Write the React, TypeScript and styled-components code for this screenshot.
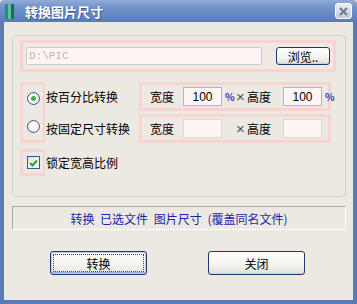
import styled, { createGlobalStyle } from "styled-components";

const GlobalStyle = createGlobalStyle`
  html, body {
    margin: 0;
    padding: 0;
    background: #ece9e3;
  }
  * {
    box-sizing: border-box;
  }
`;

const font = `"Noto Sans CJK SC", "Liberation Sans", sans-serif`;

export default function App() {
  return (
    <>
      <GlobalStyle />
      <Window>
        <TitleBar>
          <AppIcon>
            <svg width="9" height="15" viewBox="0 0 9 15">
              <rect x="0" y="0" width="3" height="15" fill="#2f8a78" />
              <rect x="3" y="0" width="3" height="15" fill="#5bc0a8" />
              <rect x="6" y="0" width="3" height="15" fill="#1f6a5c" />
            </svg>
          </AppIcon>
          <Title>转换图片尺寸</Title>
          <CloseButton>
            <svg width="9" height="9" viewBox="0 0 9 9">
              <path d="M1 1 L8 8 M8 1 L1 8" stroke="#6b7a90" strokeWidth="2" />
            </svg>
          </CloseButton>
        </TitleBar>

        <Body>
          <GroupBox>
            <Highlight>
              <PathRow>
                <TextBox $muted $mono>D:\PIC</TextBox>
                <Button $small>浏览..</Button>
              </PathRow>
            </Highlight>

            <OptionsGrid>
              <RadioColumn>
                <Radio $checked />
                <Radio />
              </RadioColumn>
              <OptionLabel $row={1}>按百分比转换</OptionLabel>
              <OptionLabel $row={2}>按固定尺寸转换</OptionLabel>
              <SizeRow $row={1}>
                <Label $w={33}>宽度</Label>
                <Input>100</Input>
                <Unit>%</Unit>
                <Times>×</Times>
                <Label $w={36}>高度</Label>
                <Input>100</Input>
                <Unit>%</Unit>
              </SizeRow>
              <SizeRow $row={2}>
                <Label $w={33}>宽度</Label>
                <Input $empty />
                <Unit />
                <Times>×</Times>
                <Label $w={36}>高度</Label>
                <Input $empty />
                <Unit />
              </SizeRow>
            </OptionsGrid>

            <CheckRow>
              <CheckHighlight>
                <CheckBox>
                  <svg width="9" height="8" viewBox="0 0 9 8">
                    <path d="M1 4 L3.5 6.5 L8 1.5" fill="none" stroke="#2fa02f" strokeWidth="2" />
                  </svg>
                </CheckBox>
              </CheckHighlight>
              <OptionLabel>锁定宽高比例</OptionLabel>
            </CheckRow>
          </GroupBox>

          <StatusPanel>转换 已选文件 图片尺寸 (覆盖同名文件)</StatusPanel>

          <ButtonRow>
            <Button $default>转换</Button>
            <Button>关闭</Button>
          </ButtonRow>
        </Body>
      </Window>
    </>
  );
}

const Window = styled.div`
  width: 357px;
  height: 304px;
  display: flex;
  flex-direction: column;
  font-family: ${font};
  font-size: 12px;
  color: #000;
`;

const TitleBar = styled.div`
  height: 22px;
  display: flex;
  align-items: center;
  padding: 0 5px 0 5px;
  background: linear-gradient(#93acd9 0%, #7191cb 35%, #6586c2 70%, #5a7bb8 100%);
  border-radius: 4px 4px 0 0;
`;

const AppIcon = styled.div`
  width: 12px;
  display: flex;
  align-items: center;
`;

const Title = styled.div`
  flex: 1;
  margin-left: 8px;
  color: #fff;
  font-weight: bold;
  font-size: 13px;
  text-shadow: 1px 1px 0 #3a5a90;
`;

const CloseButton = styled.div`
  width: 17px;
  height: 16px;
  display: flex;
  align-items: center;
  justify-content: center;
  border: 1px solid #ffffff;
  border-radius: 3px;
  background: linear-gradient(#e8ecf3, #c3cbd8);
`;

const Body = styled.div`
  flex: 1;
  display: flex;
  flex-direction: column;
  background: #ece9e3;
  border: 4px solid #5b7bb4;
  border-top: none;
  padding: 13px 7px 0 8px;
`;

const GroupBox = styled.div`
  height: 162px;
  border: 1px solid #d2d0c6;
  border-radius: 4px;
  padding: 4px 9px 0 7px;
  display: flex;
  flex-direction: column;
`;

const Highlight = styled.div`
  border: 3px solid #f8d3cf;
  background: #efe8e3;
`;

const PathRow = styled.div`
  height: 26px;
  display: flex;
  align-items: center;
  justify-content: space-between;
  padding: 0 3px 0 3px;
`;

const TextBox = styled.div<{ $muted?: boolean; $mono?: boolean }>`
  width: 236px;
  height: 18px;
  display: flex;
  align-items: center;
  padding-left: 2px;
  border: 1px solid #c9ccd4;
  background: #fef4f3;
  color: ${(p) => (p.$muted ? "#b8b8b8" : "#000")};
  font-family: ${(p) => (p.$mono ? `"Liberation Mono", monospace` : font)};
  font-size: 11px;
`;

const Button = styled.div<{ $small?: boolean; $default?: boolean }>`
  width: ${(p) => (p.$small ? "54px" : "97px")};
  height: ${(p) => (p.$small ? "18px" : "24px")};
  display: flex;
  align-items: center;
  justify-content: center;
  border: 1px solid #1c3a6e;
  border-radius: 3px;
  background: linear-gradient(#ffffff 0%, #f4f3ee 60%, #e2e0d8 100%);
  font-size: 12px;
  box-shadow: ${(p) =>
    p.$default
      ? "inset 0 0 0 1px #b8cff0, inset 0 -2px 0 #8fb0e0"
      : "inset 0 -1px 0 #d6d0c5"};
  outline: ${(p) => (p.$default ? "1px dotted #444" : "none")};
  outline-offset: -4px;
`;

const OptionsGrid = styled.div`
  display: grid;
  grid-template-columns: 25px 94px 192px;
  grid-template-rows: 29px 29px;
  row-gap: 3px;
  margin-top: 10px;
`;

const RadioColumn = styled.div`
  grid-column: 1;
  grid-row: 1 / 3;
  display: flex;
  flex-direction: column;
  justify-content: space-around;
  align-items: center;
  border: 3px solid #f8d3cf;
  border-right-width: 2px;
`;

const Radio = styled.div<{ $checked?: boolean }>`
  width: 13px;
  height: 13px;
  border-radius: 50%;
  border: 1px solid #3c5a8c;
  background: radial-gradient(circle at 50% 50%, #ffffff 30%, #dcdad2 100%);
  display: flex;
  align-items: center;
  justify-content: center;
  &::after {
    content: "";
    width: 5px;
    height: 5px;
    border-radius: 50%;
    background: ${(p) => (p.$checked ? "#3fb33f" : "transparent")};
  }
`;

const OptionLabel = styled.div<{ $row?: number }>`
  grid-column: 2;
  grid-row: ${(p) => p.$row ?? "auto"};
  display: flex;
  align-items: center;
  padding-left: 1px;
  font-size: 12px;
  white-space: nowrap;
`;

const SizeRow = styled.div<{ $row: number }>`
  grid-column: 3;
  grid-row: ${(p) => p.$row};
  display: flex;
  align-items: center;
  border: 3px solid #f8d3cf;
  padding-left: 8px;
`;

const Label = styled.span<{ $w: number }>`
  flex-shrink: 0;
  font-size: 12px;
  width: ${(p) => p.$w}px;
`;

const Input = styled.div<{ $empty?: boolean }>`
  flex-shrink: 0;
  width: 39px;
  height: 19px;
  display: flex;
  align-items: center;
  justify-content: center;
  border: 1px solid ${(p) => (p.$empty ? "#e0d6d3" : "#a9b6cc")};
  background: #fef5f4;
  font-family: "Liberation Sans", sans-serif;
  font-size: 12px;
`;

const Unit = styled.span`
  flex-shrink: 0;
  width: 9px;
  margin-left: 3px;
  color: #3030b0;
  font-size: 10px;
  font-weight: bold;
`;

const Times = styled.span`
  flex-shrink: 0;
  width: 11px;
  margin-left: 2px;
  color: #555;
  font-family: "Liberation Sans", sans-serif;
  font-size: 15px;
  line-height: 1;
`;

const CheckRow = styled.div`
  display: flex;
  margin-top: 6px;
  height: 27px;
`;

const CheckHighlight = styled.div`
  width: 25px;
  display: flex;
  align-items: center;
  justify-content: center;
  border: 3px solid #f8d3cf;
  border-right-width: 2px;
`;

const CheckBox = styled.div`
  width: 13px;
  height: 13px;
  border: 1px solid #3c5a8c;
  background: linear-gradient(135deg, #e4e2da, #ffffff);
  display: flex;
  align-items: center;
  justify-content: center;
`;

const StatusPanel = styled.div`
  margin-top: 9px;
  height: 24px;
  display: flex;
  align-items: center;
  justify-content: center;
  border-top: 1px solid #aca899;
  border-left: 1px solid #aca899;
  border-bottom: 1px solid #ffffff;
  border-right: 1px solid #ffffff;
  color: #1a23a8;
  font-size: 12px;
  word-spacing: 3px;
`;

const ButtonRow = styled.div`
  display: flex;
  justify-content: center;
  gap: 61px;
  margin-top: 21px;
  padding-right: 3px;
`;
